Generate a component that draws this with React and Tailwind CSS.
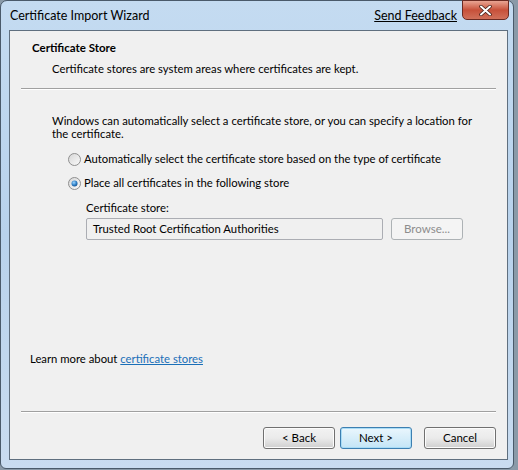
import React from "react";

const font = { fontFamily: 'Lato, "Noto Sans", sans-serif' };

function Radio({ checked }) {
  return (
    <svg width="13" height="13" viewBox="0 0 13 13" className="shrink-0">
      <defs>
        <linearGradient id={checked ? "rg1" : "rg0"} x1="0" y1="0" x2="1" y2="1">
          <stop offset="0" stopColor="#d6d6d6" />
          <stop offset="1" stopColor="#fbfbfb" />
        </linearGradient>
        <radialGradient id="dot" cx="0.4" cy="0.35" r="0.7">
          <stop offset="0" stopColor="#9fd6ff" />
          <stop offset="0.6" stopColor="#2d7fc6" />
          <stop offset="1" stopColor="#1a4f8a" />
        </radialGradient>
      </defs>
      <circle cx="6.5" cy="6.5" r="6" fill={`url(#${checked ? "rg1" : "rg0"})`} stroke="#8f8f8f" />
      {checked && <circle cx="6.5" cy="6.5" r="3" fill="url(#dot)" />}
    </svg>
  );
}

function Btn({ children, focused, disabled }) {
  return (
    <div
      className={`w-[72px] h-[22px] flex items-center justify-center rounded-[3px] border text-[11.5px] ${
        disabled
          ? "border-[#adb2b5] bg-[#f4f4f4] text-[#8d8d8d]"
          : focused
          ? "border-[#3c7fb1] bg-gradient-to-b from-[#eaf6fd] to-[#c4e5f6] text-black shadow-[inset_0_0_0_1px_#a9dcf6]"
          : "border-[#707070] bg-gradient-to-b from-[#f2f2f2] via-[#ebebeb] to-[#cfcfcf] text-black shadow-[inset_0_0_0_1px_#fcfcfc]"
      }`}
    >
      {children}
    </div>
  );
}

export default function App() {
  return (
    <div className="w-[518px] h-[470px] bg-[#8a9aa8] overflow-hidden" style={font}>
      <div className="w-[514px] h-[469px] rounded-t-[7px] rounded-b-[6px] border border-[#4a5a6a] bg-gradient-to-b from-[#c4dbf1] via-[#b8d2ec] to-[#c9dcf0] flex flex-col pl-[8px] pr-[5px] pb-[8px]">
        {/* Title bar */}
        <div className="h-[29px] flex items-start relative">
          <div className="pt-[6px] pl-[1px] text-[12.5px] text-black">Certificate Import Wizard</div>
          <div className="ml-auto pt-[6px] mr-[51px] text-[12.5px] text-black underline">Send Feedback</div>
          <div className="absolute right-[-1px] top-[-1px] w-[47px] h-[20px] rounded-b-[5px] border border-[#6b2a22] bg-gradient-to-b from-[#e8a493] via-[#c7503a] to-[#d0705a] flex items-center justify-center">
            <svg width="13" height="11" viewBox="0 0 13 11">
              <path d="M2 1.5 L11 9.5 M11 1.5 L2 9.5" stroke="#3a1a14" strokeWidth="3.4" strokeLinecap="round" />
              <path d="M2 1.5 L11 9.5 M11 1.5 L2 9.5" stroke="#ffffff" strokeWidth="2" strokeLinecap="round" />
            </svg>
          </div>
        </div>

        {/* Client area */}
        <div className="flex-1 border border-[#5f6f7f] bg-[#f0f0f0] flex flex-col text-[11.3px] text-black">
          <div className="pl-[22px] pt-[9px]">
            <div className="font-bold text-[11.5px] leading-[15px]">Certificate Store</div>
            <div className="pl-[20px] pt-[6px] leading-[15px]">Certificate stores are system areas where certificates are kept.</div>
          </div>
          <div className="mx-[11px] mt-[12px] h-[2px] border-t border-[#a0a0a0] border-b-white border-b" />

          <div className="pl-[42px] pr-[35px] pt-[24px] leading-[13px]">
            Windows can automatically select a certificate store, or you can specify a location for the certificate.
          </div>

          <div className="pl-[58px] pt-[12px] flex flex-col gap-[9px]">
            <div className="flex items-center gap-[3px] h-[15px]">
              <Radio />
              <span>Automatically select the certificate store based on the type of certificate</span>
            </div>
            <div className="flex items-center gap-[3px] h-[15px]">
              <Radio checked />
              <span>Place all certificates in the following store</span>
            </div>
          </div>

          <div className="pl-[76px] pt-[9px]">
            <div className="leading-[15px]">Certificate store:</div>
            <div className="flex items-center gap-[8px] mt-[3px]">
              <div className="w-[297px] h-[22px] border border-[#abadb3] rounded-[2px] bg-[#f0f0f0] flex items-center pl-[6px]">
                Trusted Root Certification Authorities
              </div>
              <Btn disabled>Browse...</Btn>
            </div>
          </div>

          <div className="flex-1" />
          <div className="pl-[20px] pb-[43px]">
            Learn more about <span className="text-[#1a6fb8] underline">certificate stores</span>
          </div>

          <div className="mx-[11px] h-[2px] border-t border-[#a0a0a0] border-b-white border-b" />
          <div className="flex justify-end pr-[11px] pt-[14px] pb-[10px]">
            <Btn>&lt; Back</Btn>
            <div className="w-[5px]" />
            <Btn focused>Next &gt;</Btn>
            <div className="w-[12px]" />
            <Btn>Cancel</Btn>
          </div>
        </div>
      </div>
    </div>
  );
}
